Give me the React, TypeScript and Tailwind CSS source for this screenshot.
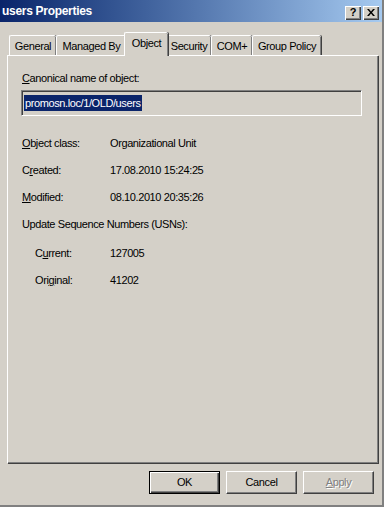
import React from "react";

const font = { fontFamily: '"Liberation Sans", Arial, sans-serif' };

const tabBase =
  "flex items-start justify-center whitespace-nowrap border-l border-t border-white bg-[#d4d0c8] pt-[3px] text-[11px] leading-[14px] tracking-[-0.4px] text-black shadow-[inset_-1px_0_0_#808080,1px_0_0_#404040] rounded-tl-[2px] rounded-tr-[2px]";

function Tab({ label, w, selected }: { label: string; w: number; selected?: boolean }) {
  return (
    <div
      className={selected ? "relative z-10 -mb-[1px] h-[24px] " + tabBase : "h-[20px] " + tabBase}
      style={{ width: w }}
    >
      {label}
    </div>
  );
}

function Row({ label, value, indent }: { label: React.ReactNode; value: string; indent?: boolean }) {
  return (
    <div className="flex h-[27px] items-center whitespace-nowrap text-[11px] tracking-[-0.4px] text-black">
      <div className={indent ? "w-[102px] shrink-0 pl-[27px]" : "w-[102px] shrink-0 pl-[14px]"}>{label}</div>
      <div>{value}</div>
    </div>
  );
}

function Btn({ children, def, disabled }: { children: React.ReactNode; def?: boolean; disabled?: boolean }) {
  return (
    <div
      className={
        "flex h-[23px] w-[71px] items-center justify-center bg-[#d4d0c8] text-[11px] tracking-[-0.4px] " +
        (def
          ? "border border-black shadow-[inset_1px_1px_0_#ffffff,inset_-1px_-1px_0_#404040,inset_-2px_-2px_0_#808080]"
          : "border-l border-t border-white border-r border-b border-r-[#404040] border-b-[#404040] shadow-[inset_-1px_-1px_0_#808080]") +
        (disabled ? " text-[#808080] [text-shadow:1px_1px_0_#ffffff]" : " text-black")
      }
    >
      {children}
    </div>
  );
}

export default function App() {
  return (
    <div className="relative h-[507px] w-[384px] overflow-hidden bg-[#d4d0c8]" style={font}>
      <div className="flex h-[507px] w-[384px] flex-col border-b-2 border-r-2 border-b-[#808080] border-r-[#808080]">
        {/* Title bar */}
        <div className="flex h-[22px] items-center bg-gradient-to-r from-[#0a246a] to-[#a6caf0] pl-[2px] pr-[3px]">
          <div className="flex-1 text-[12px] font-bold tracking-[-0.3px] text-white">users Properties</div>
          <div className="mt-[3px] flex gap-[2px]">
            <div className="flex h-[14px] w-[16px] items-center justify-center bg-[#d4d0c8] text-[11px] font-bold leading-none text-black shadow-[inset_1px_1px_0_#ffffff,inset_-1px_-1px_0_#404040,inset_-2px_-2px_0_#808080]">
              ?
            </div>
            <div className="flex h-[14px] w-[16px] items-center justify-center bg-[#d4d0c8] shadow-[inset_1px_1px_0_#ffffff,inset_-1px_-1px_0_#404040,inset_-2px_-2px_0_#808080]">
              <svg width="8" height="7" viewBox="0 0 8 7">
                <path d="M0 0h2l2 2.5L6 0h2L5 3.5 8 7H6L4 4.5 2 7H0l3-3.5z" fill="#000" />
              </svg>
            </div>
          </div>
        </div>

        {/* Tabs */}
        <div className="ml-[9px] mt-[9px] flex h-[24px] items-end">
          <Tab label="General" w={47} />
          <Tab label="Managed By" w={70} />
          <div className="-mx-[2px] flex items-end">
            <Tab label="Object" w={44} selected />
          </div>
          <Tab label="Security" w={45} />
          <Tab label="COM+" w={41} />
          <Tab label="Group Policy" w={69} />
        </div>

        {/* Panel */}
        <div className="ml-[7px] flex h-[408px] w-[371px] flex-col border-l border-t border-white shadow-[inset_-1px_-1px_0_#808080,1px_1px_0_#404040]">
          <div className="mt-[15px] flex h-[14px] items-center whitespace-nowrap pl-[14px] text-[11px] tracking-[-0.4px] text-black">
            <span>
              <span className="underline">C</span>anonical name of object:
            </span>
          </div>
          <div className="ml-[13px] mt-[5px] flex h-[26px] w-[341px] items-center border-b border-l border-r border-t border-b-white border-l-[#808080] border-r-white border-t-[#808080] bg-[#d4d0c8] pl-[2px] shadow-[inset_1px_1px_0_#404040]">
            <span className="bg-[#0a246a] px-[1px] text-[11px] leading-[16px] tracking-[-0.4px] text-white">promosn.loc/1/OLD/users</span>
          </div>
          <div className="mt-[14px]" />
          <Row label={<span><span className="underline">O</span>bject class:</span>} value="Organizational Unit" />
          <Row label={<span>C<span className="underline">r</span>eated:</span>} value="17.08.2010 15:24:25" />
          <Row label={<span><span className="underline">M</span>odified:</span>} value="08.10.2010 20:35:26" />
          <div className="flex h-[27px] items-center whitespace-nowrap pl-[14px] text-[11px] tracking-[-0.4px] text-black">
            Update Sequence Numbers (USNs):
          </div>
          <div className="mt-[2px]" />
          <Row indent label={<span>C<span className="underline">u</span>rrent:</span>} value="127005" />
          <Row indent label={<span>Ori<span className="underline">g</span>inal:</span>} value="41202" />
        </div>

        {/* Buttons */}
        <div className="ml-[149px] mt-[8px] flex gap-[6px]">
          <Btn def>OK</Btn>
          <Btn>Cancel</Btn>
          <Btn disabled>
            <span>
              <span className="underline">A</span>pply
            </span>
          </Btn>
        </div>
      </div>
    </div>
  );
}
